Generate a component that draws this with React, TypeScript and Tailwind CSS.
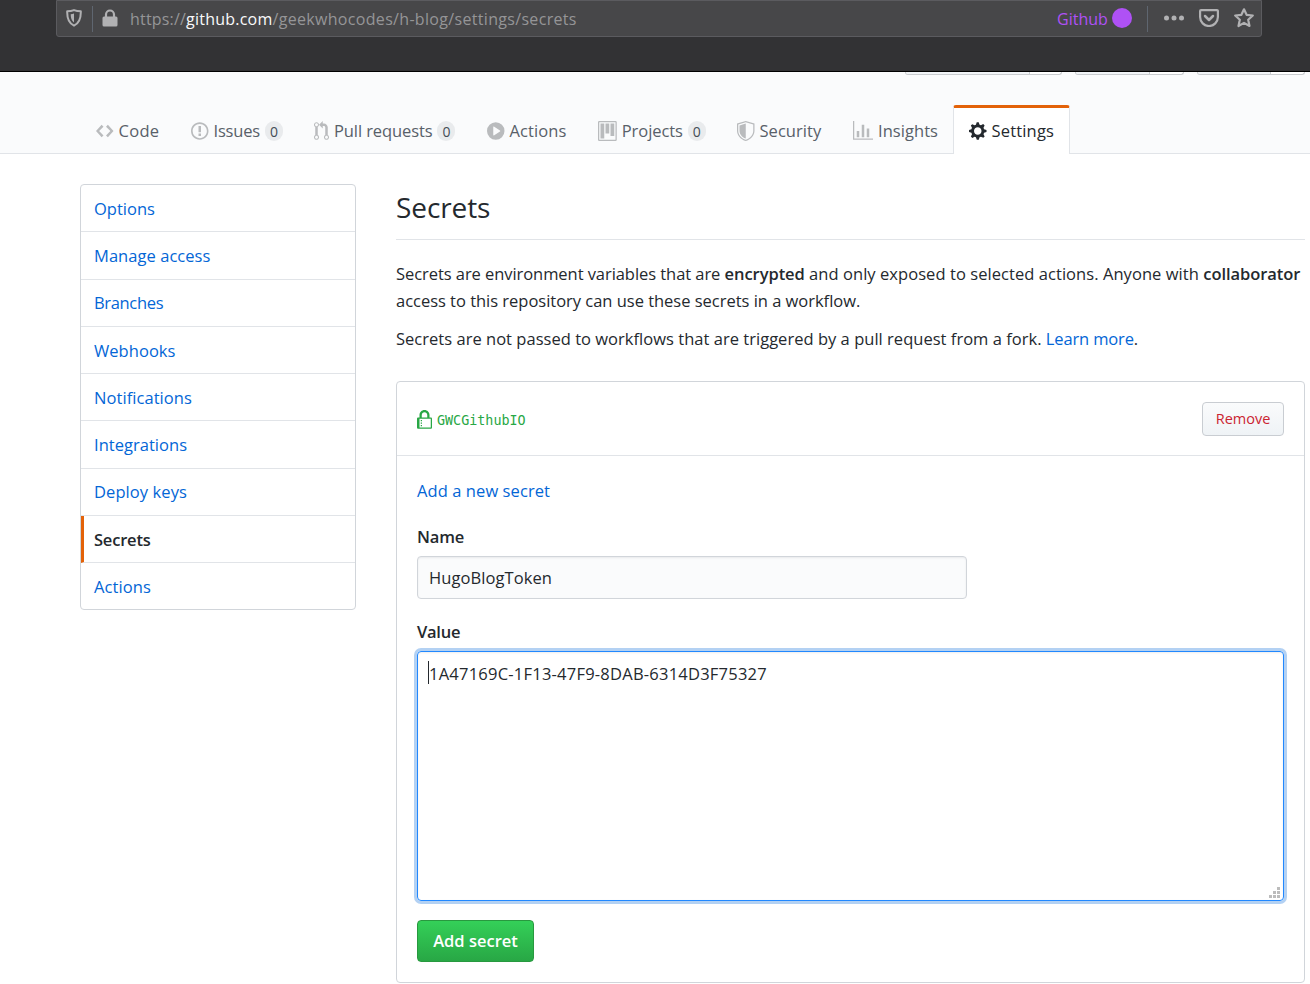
type OcticonProps = { w: number; d: string; className?: string };

function Octicon({ w, d, className = "" }: OcticonProps) {
  return (
    <svg viewBox={`0 0 ${w} 16`} width={w * 1.25} height={20} fill="currentColor" fillRule="evenodd" className={`shrink-0 ${className}`}>
      <path d={d} />
    </svg>
  );
}

const icons = {
  code: "M9.5 3L8 4.5 11.5 8 8 11.5 9.5 13 14 8 9.5 3zm-5 0L0 8l4.5 5L6 11.5 2.5 8 6 4.5 4.5 3z",
  issue: "M7 2.3c3.14 0 5.7 2.56 5.7 5.7s-2.56 5.7-5.7 5.7A5.71 5.71 0 0 1 1.3 8c0-3.14 2.56-5.7 5.7-5.7zM7 1C3.14 1 0 4.14 0 8s3.14 7 7 7 7-3.14 7-7-3.14-7-7-7zm1 3H6v5h2V4zm0 6H6v2h2v-2z",
  pull: "M11 11.28V5c-.03-.78-.34-1.47-.94-2.06C9.46 2.35 8.78 2.03 8 2H7V0L4 3l3 3V4h1c.27.02.48.11.69.31.21.2.3.42.31.69v6.28A1.993 1.993 0 0 0 10 15a1.993 1.993 0 0 0 1-3.72zm-1 2.92c-.66 0-1.2-.55-1.2-1.2 0-.65.55-1.2 1.2-1.2.65 0 1.2.55 1.2 1.2 0 .65-.55 1.2-1.2 1.2zM4 3c0-1.11-.89-2-2-2a1.993 1.993 0 0 0-1 3.72v6.56A1.993 1.993 0 0 0 2 15a1.993 1.993 0 0 0 1-3.72V4.72c.59-.34 1-.98 1-1.72zm-.8 10c0 .66-.55 1.2-1.2 1.2-.65 0-1.2-.55-1.2-1.2 0-.65.55-1.2 1.2-1.2.65 0 1.2.55 1.2 1.2zM2 4.2C1.34 4.2.8 3.65.8 3c0-.65.55-1.2 1.2-1.2.65 0 1.2.55 1.2 1.2 0 .65-.55 1.2-1.2 1.2z",
  play: "M14 8A7 7 0 1 1 0 8a7 7 0 0 1 14 0zm-8.223 3.482l4.599-3.066a.5.5 0 0 0 0-.832L5.777 4.518A.5.5 0 0 0 5 4.934v6.132a.5.5 0 0 0 .777.416z",
  project: "M10 12h3V2h-3v10zm-4-2h3V2H6v8zm-4 4h3V2H2v12zm-1 1h13V1H1v14zM14 0H1a1 1 0 0 0-1 1v14a1 1 0 0 0 1 1h13a1 1 0 0 0 1-1V1a1 1 0 0 0-1-1z",
  shield: "M0 2l7-2 7 2v6.02C14 12.69 8.69 16 7 16c-1.69 0-7-3.31-7-7.98V2zm1 .75L7 1l6 1.75v5.268C13 12.104 8.449 15 7 15c-1.449 0-6-2.896-6-6.982V2.75zm1 .75L7 2v12c-1.207 0-5-2.482-5-5.985V3.5z",
  graph: "M16 14v1H0V0h1v14h15zM5 13H3V8h2v5zm4 0H7V3h2v10zm4 0h-2V6h2v7z",
  gear: "M14 8.77v-1.6l-1.94-.64-.45-1.09.88-1.84-1.13-1.13-1.81.91-1.09-.45-.69-1.92h-1.6l-.63 1.94-1.11.45-1.84-.88-1.13 1.13.91 1.81-.45 1.09L0 7.23v1.59l1.94.64.45 1.09-.88 1.84 1.13 1.13 1.81-.91 1.09.45.69 1.92h1.59l.63-1.94 1.11-.45 1.84.88 1.13-1.13-.92-1.81.47-1.09L14 8.75v.02zM7 11c-1.66 0-3-1.34-3-3s1.34-3 3-3 3 1.34 3 3-1.34 3-3 3z",
  lock: "M4 13H3v-1h1v1zm8-6v7c0 .55-.45 1-1 1H1c-.55 0-1-.45-1-1V7c0-.55.45-1 1-1h1V4c0-2.2 1.8-4 4-4s4 1.8 4 4v2h1c.55 0 1 .45 1 1zM3.8 6h4.41V4c0-1.22-.98-2.2-2.2-2.2-1.22 0-2.2.98-2.2 2.2v2H3.8zM11 7H2v7h9V7zM4 8H3v1h1V8zm0 2H3v1h1v-1z",
};

function BrowserBar() {
  return (
    <div className="h-[72px] border-b border-black bg-[#323234] pl-14">
      <div className="flex h-[37px] w-[1206px] items-center rounded-b-[3px] border border-[#5b5b5f] bg-[#474749] text-[#b1b1b3]">
        <svg viewBox="0 0 16 18" className="mb-px ml-[9px] h-[18px] w-4 shrink-0" fill="none" stroke="currentColor" strokeWidth="2">
          <path d="M8 1.1c2.2.9 4.4 1.2 6.8 1.2C15 9 13.2 14.3 8 16.7 2.8 14.3 1 9 1.2 2.3 3.6 2.3 5.8 2 8 1.1z" strokeLinejoin="round" />
          <path d="M8 4.5v9C5.700 11.900 4.700 9 4.700 5.200c1.200 0 2.200-.2 3.300-.7z" fill="currentColor" stroke="none" />
        </svg>
        <div className="ml-[10px] h-[26px] w-px bg-[#5f6670]" />
        <svg viewBox="0 0 16 18" className="mb-px ml-[9px] h-[18px] w-4 shrink-0">
          <path d="M4 9V5.5a4 4 0 0 1 8 0V9" fill="none" stroke="currentColor" strokeWidth="2.2" />
          <rect x="0.5" y="7.5" width="15" height="10" rx="1.5" fill="currentColor" />
        </svg>
        <div className="ml-[12px] flex w-[927px] whitespace-nowrap pt-px text-[16px] text-[#959597]">
          <span className="tracking-[0.18px]">https://</span>
          <span className="tracking-[0.23px] text-[#f9f9fa]">github.com</span>
          <span className="tracking-[0.32px]">/geekwhocodes/h-blog/settings/secrets</span>
        </div>
        <span className="pt-px text-[16px] text-[#af51f5]">Github</span>
        <div className="mb-[2px] ml-1 h-5 w-5 shrink-0 rounded-full bg-[#af51f5]" />
        <div className="ml-[15px] h-[26px] w-px bg-[#5f6670]" />
        <svg viewBox="0 0 20 6" className="mb-px ml-4 h-[6px] w-5 shrink-0" fill="currentColor">
          <circle cx="2.5" cy="3" r="2.5" />
          <circle cx="10" cy="3" r="2.5" />
          <circle cx="17.5" cy="3" r="2.5" />
        </svg>
        <svg viewBox="0 0 20 18" className="mb-[2px] ml-[15px] h-[18px] w-5 shrink-0" fill="none" stroke="currentColor" strokeWidth="2.2" strokeLinecap="round" strokeLinejoin="round">
          <path d="M2 1.1h16a.9.9 0 0 1 .9.9v6.1a8.9 8.9 0 0 1-17.8 0V2A.9.9 0 0 1 2 1.1z" />
          <path d="M6 7l4 4 4-4" strokeWidth="2.5" />
        </svg>
        <svg viewBox="0 0 20 20" className="mb-[2px] ml-[15px] h-5 w-5 shrink-0" fill="none" stroke="currentColor" strokeWidth="2.2" strokeLinejoin="round">
          <path d="M10 1.3l2.6 5.5 6.2.7-4.600 4.200 1.300 6.300-5.500-3.100-5.500 3.100 1.300-6.300L1.200 7.500l6.200-.7z" />
        </svg>
      </div>
    </div>
  );
}

function ClippedButton({ left, right }: { left: string; right: string }) {
  return (
    <div className="flex h-[3px] overflow-hidden rounded-b-[4px] border border-t-0 border-[#c9cccf] bg-white">
      <div className={`${left} border-r border-[#c9cccf] bg-[#f1f4f7]`} />
      <div className={right} />
    </div>
  );
}

const tabs = [
  { label: "Code", icon: icons.code, w: 14, width: "w-[95px]", tracking: "tracking-[0.3px]" },
  { label: "Issues", icon: icons.issue, w: 14, width: "w-[123px]", tracking: "tracking-[-0.2px]", count: true },
  { label: "Pull requests", icon: icons.pull, w: 12, width: "w-[173px]", tracking: "tracking-[-0.1px]", count: true },
  { label: "Actions", icon: icons.play, w: 14, width: "w-[111px]", tracking: "tracking-[0.1px]" },
  { label: "Projects", icon: icons.project, w: 15, width: "w-[139px]", tracking: "tracking-[-0.07px]", count: true },
  { label: "Security", icon: icons.shield, w: 14, width: "w-[116px]", tracking: "tracking-[0.05px]" },
  { label: "Insights", icon: icons.graph, w: 16, width: "w-[116px]", tracking: "tracking-[0.05px]" },
];

function RepoHeader() {
  return (
    <header className="flex h-[82px] flex-col border-b border-[#e1e4e8] bg-[#fafbfc]">
      <div className="flex h-[33px] shrink-0 items-start gap-[13px] pl-[905px]">
        <ClippedButton left="w-[124px]" right="w-[31px]" />
        <ClippedButton left="w-[74px]" right="w-[33px]" />
        <ClippedButton left="w-[73px]" right="w-[33px]" />
      </div>
      <nav className="flex h-[49px] shrink-0 pl-20 text-[#586069]">
        {tabs.map((t) => (
          <div key={t.label} className={`flex items-center whitespace-nowrap pl-4 pt-[3px] ${t.width}`}>
            <Octicon w={t.w} d={t.icon} className="text-[#b9bbbd]" />
            <span className={`ml-[5px] ${t.tracking}`}>{t.label}</span>
            {t.count && (
              <span className="ml-[5px] flex h-5 w-[18px] items-center justify-center rounded-full bg-[#e9ebed] text-[14px] text-[#444d56]">0</span>
            )}
          </div>
        ))}
        <div className="flex w-[117px] items-center rounded-t-[3px] border-x border-t-[3px] border-x-[#e1e4e8] border-t-[#e36209] bg-white pl-[15px] text-[#24292e]">
          <Octicon w={14} d={icons.gear} />
          <span className="ml-[5px] tracking-[0.17px]">Settings</span>
        </div>
      </nav>
    </header>
  );
}

const menu = [
  { label: "Options", tracking: "tracking-normal" },
  { label: "Manage access", tracking: "tracking-[0.05px]" },
  { label: "Branches", tracking: "tracking-[-0.33px]" },
  { label: "Webhooks", tracking: "tracking-[0.05px]" },
  { label: "Notifications", tracking: "tracking-[0.06px]" },
  { label: "Integrations", tracking: "tracking-[0.03px]" },
  { label: "Deploy keys", tracking: "tracking-[0.08px]" },
  { label: "Secrets", tracking: "tracking-[-0.2px]", active: true },
  { label: "Actions", tracking: "tracking-[0.1px]" },
];

function Sidebar() {
  return (
    <aside className="h-[426px] w-[276px] shrink-0 overflow-hidden rounded-[4px] border border-[#d1d5da]">
      {menu.map((m) => (
        <div
          key={m.label}
          className={`flex h-[47.25px] items-center border-b border-[#e1e4e8] pt-[2px] last:border-b-0 ${
            m.active ? "border-l-[3px] border-l-[#e36209] pl-[10px] font-semibold text-[#24292e]" : "pl-[13px] text-[#0366d6]"
          }`}
        >
          <span className={m.tracking}>{m.label}</span>
        </div>
      ))}
    </aside>
  );
}

function Secrets() {
  return (
    <main className="w-[909px] shrink-0">
      <h1 className="h-14 border-b border-[#e1e4e8] text-[28px] leading-[46px] tracking-[-0.1px]">Secrets</h1>
      <p className="mt-[20px] whitespace-nowrap leading-[27px]">
        <span className="tracking-[-0.06px]">Secrets are environment variables that are</span>{" "}
        <b className="font-semibold tracking-[-0.06px]">encrypted</b>{" "}
        <span className="tracking-[0.06px]">and only exposed to selected actions. Anyone with</span>{" "}
        <b className="font-semibold tracking-[-0.06px]">collaborator</b>
        <br />
        <span className="tracking-[-0.02px]">access to this repository can use these secrets in a workflow.</span>
      </p>
      <p className="mt-[11px] whitespace-nowrap leading-[27px]">
        <span className="tracking-[0.025px]">Secrets are not passed to workflows that are triggered by a pull request from a fork.</span>{" "}
        <a className="tracking-[-0.15px] text-[#0366d6]">Learn more</a>.
      </p>
      <section className="mt-[29px] h-[602px] rounded-[4px] border border-[#d1d5da]">
        <div className="flex h-[74px] items-center justify-between border-b border-[#e1e4e8] px-5">
          <div className="flex items-center pt-[3px] text-[#28a745]">
            <Octicon w={12} d={icons.lock} />
            <code className="ml-[5px] pt-[3px] font-['DejaVu_Sans_Mono',monospace] text-[13.4px]">GWCGithubIO</code>
          </div>
          <button className="h-[34px] w-[82px] rounded-[4px] border border-[#c9cdd2] bg-linear-to-b from-[#fafbfc] to-[#eff3f6] pt-px text-[14.5px] font-medium text-[#cb2431]">
            Remove
          </button>
        </div>
        <form className="px-5 pt-[21px]">
          <div className="h-7 leading-7 tracking-[0.08px] text-[#0366d6]">Add a new secret</div>
          <label className="mt-[18px] block h-7 font-semibold leading-7 tracking-[-0.15px]">Name</label>
          <div className="mt-[5px] flex h-[43px] w-[550px] items-center rounded-[4px] border border-[#d1d5da] bg-[#fafbfc] pl-[11px] pt-px tracking-[0.08px] shadow-[inset_0_1px_2px_rgba(27,31,35,0.075)]">
            HugoBlogToken
          </div>
          <label className="mt-[19px] block h-7 font-semibold leading-7 tracking-[-0.25px]">Value</label>
          <div className="mt-[5px] flex h-[250px] w-[867px] rounded-[4px] border border-[#2188ff] pl-[10px] pt-[9px] shadow-[inset_0_1px_2px_rgba(27,31,35,0.075),0_0_0_3px_rgba(3,102,214,0.3)]">
            <div className="h-[23px] w-px bg-[#24292e]" />
            <span className="h-[26px] leading-[26px] tracking-[0.23px]">1A47169C-1F13-47F9-8DAB-6314D3F75327</span>
            <svg viewBox="0 0 11 11" className="mb-[2px] ml-auto mr-[3px] h-[11px] w-[11px] self-end" fill="#bcbcbc">
              <path d="M8 0h3v3H8zM4 4h3v3H4zM8 4h3v3H8zM0 8h3v3H0zM4 8h3v3H4zM8 8h3v3H8z" />
            </svg>
          </div>
          <button type="button" className="mt-[19px] h-[42px] w-[117px] rounded-[4px] border border-[#28993f] bg-linear-to-b from-[#34d058] to-[#28a745] pt-px font-semibold text-white">
            Add secret
          </button>
        </form>
      </section>
    </main>
  );
}

export default function App() {
  return (
    <div className="h-[984px] w-[1310px] overflow-hidden bg-white font-['Open_Sans','Noto_Sans',sans-serif] text-[16.5px] text-[#24292e]">
      <BrowserBar />
      <RepoHeader />
      <div className="flex gap-10 pl-20 pt-[30px]">
        <Sidebar />
        <Secrets />
      </div>
    </div>
  );
}
